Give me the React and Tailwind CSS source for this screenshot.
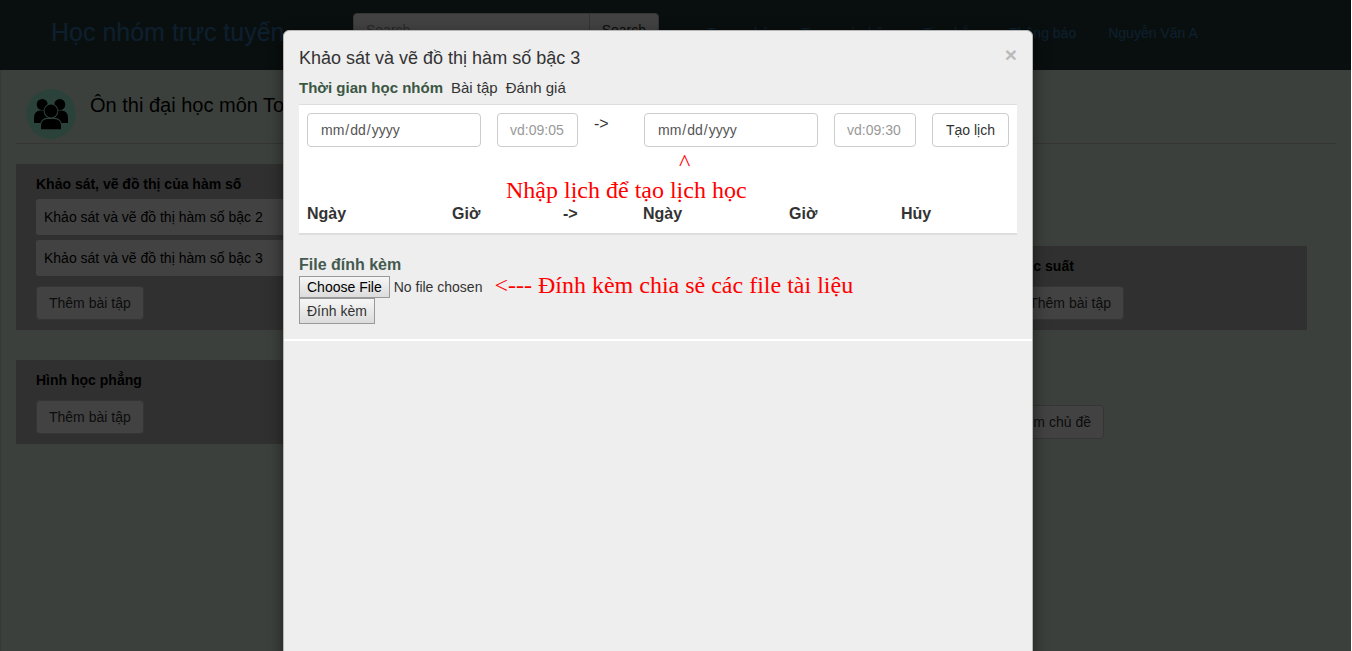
import React from "react";

const navLinks = ["Trang chủ", "Trang cá nhân", "Tin nhắn", "Thông báo", "Nguyễn Văn A"];

function Navbar() {
  return (
    <header className="flex h-[70px] items-start bg-[#263d36] text-[#337ab7]">
      <a href="#" className="ml-[51px] mt-3 w-[302px] shrink-0 whitespace-nowrap text-[25px] leading-10">
        Học nhóm trực tuyến
      </a>
      <form className="mt-[13px] flex h-[34px] w-[306px] shrink-0" onSubmit={(e) => e.preventDefault()}>
        <input
          type="text"
          aria-label="Search"
          placeholder="Search"
          className="min-w-0 flex-1 rounded-l border border-[#ccc] bg-white px-3 text-sm placeholder:text-[#999]"
        />
        <button className="-ml-px rounded-r border border-[#ccc] bg-white px-3 text-sm text-[#333]">Search</button>
      </form>
      <nav className="ml-12 mt-[23px] flex gap-8 whitespace-nowrap text-sm">
        {navLinks.map((t) => (
          <a key={t} href="#">{t}</a>
        ))}
      </nav>
    </header>
  );
}

function GroupIcon() {
  return (
    <svg viewBox="0 0 50 50" className="size-[50px] shrink-0" aria-hidden="true">
      <circle cx="25" cy="25" r="25" fill="#a5ffe0" />
      <g fill="#000">
        <circle cx="16.200" cy="15.500" r="5.500" />
        <circle cx="33.800" cy="15.500" r="5.500" />
        <path d="M8 34v-5q0-7 6-7.500h4l5 8-7 4.500zM42 34v-5q0-7-6-7.500h-4l-5 8 7 4.500z" />
      </g>
      <g fill="#a5ffe0">
        <circle cx="25" cy="22" r="7.400" />
        <path d="M14 41v-3.500q0-8.700 8-8.700h6q8 0 8 8.700V41z" />
      </g>
      <g fill="#000">
        <circle cx="25" cy="22" r="6.400" />
        <path d="M15 40.300v-3.300q0-7 7-7h6q7 0 7 7v3.300z" />
      </g>
    </svg>
  );
}

function Topic({ title, items = [], className = "" }) {
  return (
    <section className={"bg-[#b9b9b9] px-5 py-2.5 " + className}>
      <h3 className="text-sm leading-5 font-bold text-black">{title}</h3>
      {items.length > 0 && (
        <div className="mt-[5px] flex flex-col gap-[5px]">
          {items.map((t) => (
            <a key={t} href="#" className="rounded-[3px] bg-white p-2 text-sm leading-5 whitespace-nowrap text-black">
              {t}
            </a>
          ))}
        </div>
      )}
      <button className="mt-2.5 h-[34px] rounded border border-[#ccc] bg-white px-3 text-sm text-[#333]">
        Thêm bài tập
      </button>
    </section>
  );
}

const field = "h-[34px] min-w-0 rounded border border-[#ccc] bg-white px-3 text-sm text-[#555] placeholder:text-[#999]";
const dateField = field + " w-[174px] [&::-webkit-calendar-picker-indicator]:hidden";
const note = "font-['Liberation_Serif',serif] text-[#f00]";

function Schedule() {
  return (
    <div className="border-t border-b-2 border-[#ddd] bg-white px-2 pt-2 pb-[7px]">
      <form className="flex items-start gap-4" onSubmit={(e) => e.preventDefault()}>
        <input type="date" lang="en-US" aria-label="Ngày bắt đầu" className={dateField} />
        <input type="text" aria-label="Giờ bắt đầu" placeholder="vd:09:05" className={field + " w-[81px]"} />
        <span className="w-[34px] text-base leading-[22px]">-&gt;</span>
        <input type="date" lang="en-US" aria-label="Ngày kết thúc" className={dateField} />
        <input type="text" aria-label="Giờ kết thúc" placeholder="vd:09:30" className={field + " w-[82px]"} />
        <button className="h-[34px] w-[77px] rounded border border-[#ccc] bg-white text-sm whitespace-nowrap text-[#333]">
          Tạo lịch
        </button>
      </form>
      <p className={note + " ml-[372px] mt-[3px] mb-1 text-2xl leading-6"}>^</p>
      <p className={note + " ml-[199px] text-2xl leading-6"}>Nhập lịch để tạo lịch học</p>
      <table className="w-full table-fixed text-left text-base leading-6">
        <thead>
          <tr>
            <th className="w-[145px]">Ngày</th>
            <th className="w-[111px]">Giờ</th>
            <th className="w-20">-&gt;</th>
            <th className="w-[146px]">Ngày</th>
            <th className="w-28">Giờ</th>
            <th>Hủy</th>
          </tr>
        </thead>
      </table>
    </div>
  );
}

const nativeButton = "border border-[#999] bg-linear-to-b from-[#f6f6f6] to-[#dcdcdc] px-[7px] text-sm";

function Modal() {
  return (
    <div
      role="dialog"
      aria-labelledby="dialog-title"
      className="mt-[30px] min-h-[700px] w-[750px] rounded-md border border-[#b5b5b5] bg-[#eee] text-[#333] shadow-[0_5px_15px_rgba(0,0,0,0.5)]"
    >
      <div className="border-b-2 border-white p-[15px]">
        <div className="flex items-start justify-between">
          <h2 id="dialog-title" className="text-lg leading-6">Khảo sát và vẽ đồ thị hàm số bậc 3</h2>
          <button aria-label="Close" className="text-[21px] leading-[18px] font-bold text-[#bbb]">×</button>
        </div>
        <nav className="mt-2 flex gap-2 text-[15px] leading-5">
          <a href="#" className="font-bold text-[#3b5744]">Thời gian học nhóm</a>
          <a href="#">Bài tập</a>
          <a href="#">Đánh giá</a>
        </nav>
        <div className="mt-1.5">
          <Schedule />
        </div>
        <form className="mt-[18px] flex flex-col items-start" onSubmit={(e) => e.preventDefault()}>
          <h3 className="text-base leading-[23px] font-bold text-[#445a4e]">File đính kèm</h3>
          <div className="flex h-[22px] items-center whitespace-nowrap">
            <button type="button" className={nativeButton + " h-[22px] text-black"}>Choose File</button>
            <span className="ml-1 text-sm">No file chosen</span>
            <span className={note + " ml-3 pb-1 text-2xl leading-[22px]"}>
              &lt;--- Đính kèm chia sẻ các file tài liệu
            </span>
          </div>
          <button className={nativeButton + " h-[26px]"}>Đính kèm</button>
        </form>
      </div>
    </div>
  );
}

export default function App() {
  return (
    <div className="relative h-screen overflow-hidden bg-white pr-px font-['Liberation_Sans',Arial,sans-serif]">
      <div className="h-full border-l border-[#d8d8d8] bg-[#e9f8e8]">
        <div className="-ml-px">
          <Navbar />
        </div>
        <main className="mx-[15px]">
          <div className="flex gap-3.5 border-b border-[#ccc] pt-[19px] pb-1 pl-2.5">
            <GroupIcon />
            <h1 className="mt-1 text-xl leading-6 text-black">Ôn thi đại học môn Toán</h1>
          </div>
          <div className="mr-[29px] mt-5 grid grid-cols-4 items-end gap-x-4 gap-y-[30px]">
            <Topic
              title="Khảo sát, vẽ đồ thị của hàm số"
              items={["Khảo sát và vẽ đồ thị hàm số bậc 2", "Khảo sát và vẽ đồ thị hàm số bậc 3"]}
            />
            <Topic title="Xác suất" className="col-start-4" />
            <Topic title="Hình học phẳng" />
            <div className="col-start-4 pb-[5px]">
              <button className="h-[34px] rounded border border-[#ccc] bg-white px-3 text-sm text-[#333]">
                Thêm chủ đề
              </button>
            </div>
          </div>
        </main>
      </div>
      <div className="absolute inset-0 right-px flex items-start justify-center overflow-hidden bg-black/74 pr-[35px]">
        <Modal />
      </div>
    </div>
  );
}
